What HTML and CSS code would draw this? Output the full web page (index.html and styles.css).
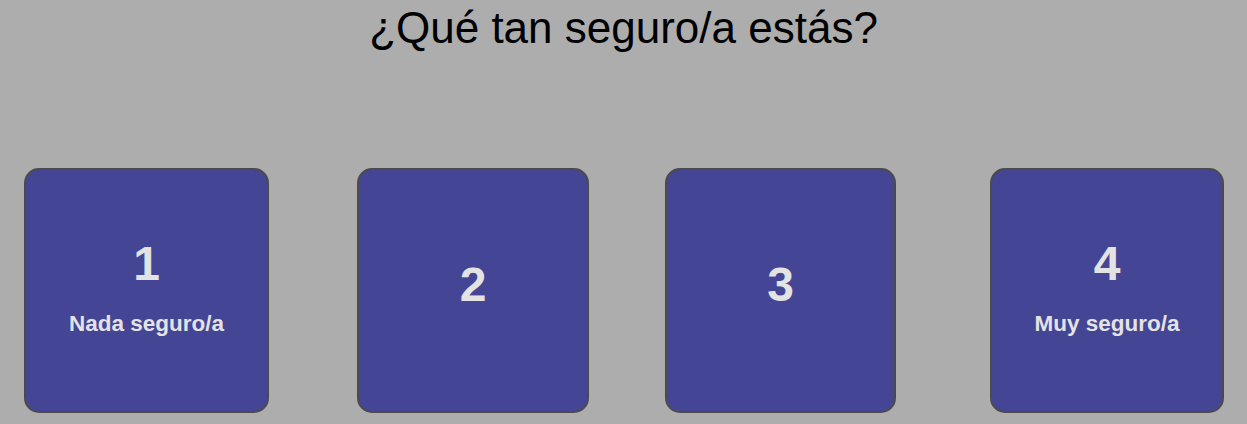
FILE: index.html
```html
<!DOCTYPE html>
<html lang="es">
<head>
<meta charset="utf-8">
<title>¿Qué tan seguro/a estás?</title>
<link rel="stylesheet" href="styles.css">
</head>
<body>
<h1 class="title">¿Qué tan seguro/a estás?</h1>
<div class="options">
  <button class="card card-1"><span class="num">1</span><span class="label">Nada seguro/a</span></button>
  <button class="card card-2"><span class="num">2</span></button>
  <button class="card card-3"><span class="num">3</span></button>
  <button class="card card-4"><span class="num">4</span><span class="label">Muy seguro/a</span></button>
</div>
</body>
</html>
```
FILE: styles.css
```css
html, body {
  margin: 0;
  padding: 0;
  background: #adadad;
  font-family: "Liberation Sans", Arial, sans-serif;
}
.title {
  margin: 3px 0 0;
  font-size: 44px;
  font-weight: normal;
  line-height: 50px;
  text-align: center;
  color: #000;
}
.options {
  display: flex;
  align-items: flex-start;
  margin-top: 115px;
  padding-left: 24px;
}
.card {
  box-sizing: border-box;
  height: 245px;
  background: #444594;
  border: 2px solid #4b4b4b;
  border-radius: 15px;
  color: #e3e3e3;
  font-family: "Liberation Sans", Arial, sans-serif;
  font-weight: bold;
  display: flex;
  flex-direction: column;
  align-items: center;
  justify-content: center;
  padding: 0 0 6px;
  cursor: pointer;
}
.card-1 { width: 245px; }
.card-2 { width: 232px; margin-left: 88px; }
.card-3 { width: 231px; margin-left: 76px; }
.card-4 { width: 234px; margin-left: 94px; }
.num {
  font-size: 48px;
  line-height: 1;
}
.num:only-child {
  margin-bottom: 6px;
}
.label {
  font-size: 22.5px;
  line-height: 1;
  margin-top: 25px;
}
```
